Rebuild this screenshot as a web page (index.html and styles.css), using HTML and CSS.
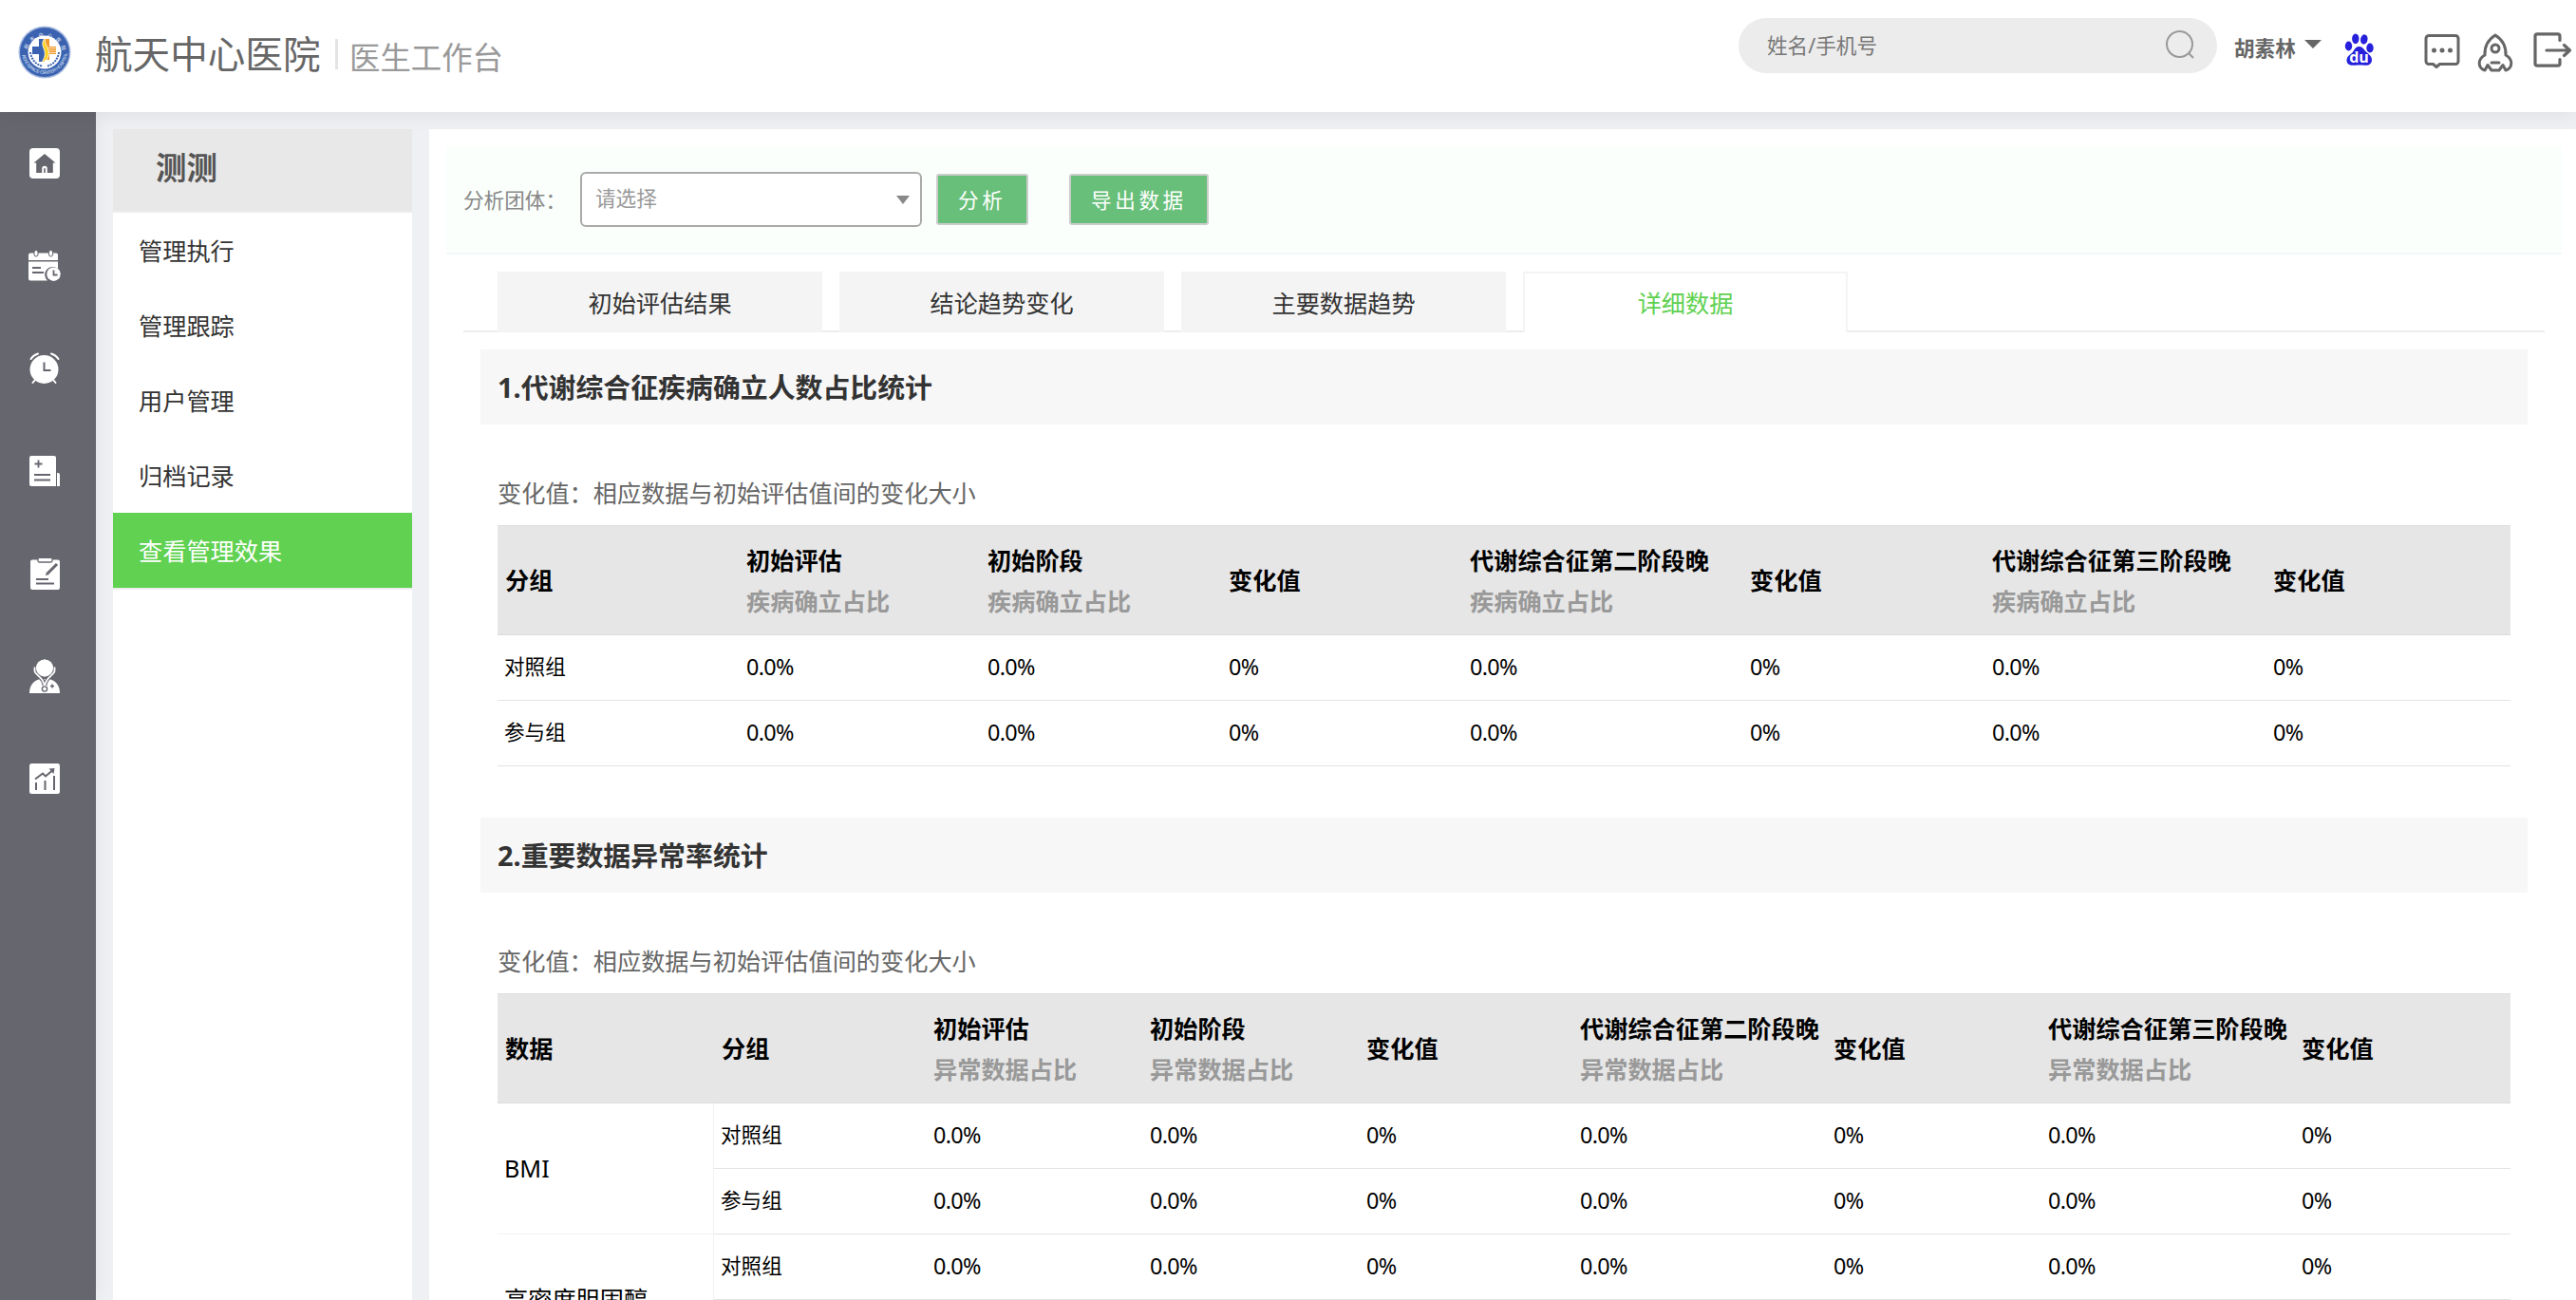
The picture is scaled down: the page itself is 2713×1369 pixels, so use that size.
FILE: index.html
```html
<!DOCTYPE html>
<html lang="zh-CN">
<head>
<meta charset="utf-8">
<title>航天中心医院 医生工作台</title>
<link rel="stylesheet" href="styles.css">
</head>
<body>
<header class="topbar">
  <svg class="logo" width="56" height="56" viewBox="0 0 56 56">
    <defs>
      <path id="arc-top" d="M8.5 31a19.5 19.5 0 1 1 39 0"/>
      <path id="arc-bottom" d="M4 27a24 24 0 0 0 48 0"/>
    </defs>
    <circle cx="28" cy="28" r="27.5" fill="#a9bbe0"/>
    <circle cx="28" cy="28" r="26" fill="#3a62b0"/>
    <circle cx="28" cy="28" r="17.5" fill="#fff"/>
    <text class="logo-text"><textPath href="#arc-top" startOffset="6">航天中心医院</textPath></text>
    <text class="logo-text-en"><textPath href="#arc-bottom" startOffset="4">AEROSPACE CENTER HOSPITAL</textPath></text>
    <path d="M22 14h6v24h-6v-8h-7v-8h7z" fill="#3a62b0"/>
    <path d="M28 14h5v8h7v8h-7v6h-5z" fill="#f29a2c"/>
    <path d="M30 23.5h10M30 26h10M30 28.500h10" stroke="#fff" stroke-width=".7"/>
    <path d="M29 12c-6 7-2 10-1 15s-1 8-3 12c7-3 8-8 7-13s-5-7-3-14z" fill="#ffd21f" stroke="#fff" stroke-width=".8"/>
    <path d="M13 28c1 8 6 13 13 15M43 28c-1 8-6 13-13 15" fill="none" stroke="#3a62b0" stroke-width="2" stroke-dasharray="2 1"/>
  </svg>
  <h1 class="brand">航天中心医院</h1>
  <span class="brand-sep"></span>
  <span class="brand-sub">医生工作台</span>
  <label class="search">
    <span>姓名/手机号</span>
    <svg width="32" height="32" viewBox="0 0 32 32" fill="none" stroke="#999" stroke-width="2"><circle cx="15.500" cy="15.500" r="13.500"/><path d="M25 25l5 5"/></svg>
  </label>
  <span class="user">胡素林</span>
  <span class="user-caret"></span>
  <svg class="baidu" width="32" height="35" viewBox="0 0 32 35" fill="#2620dd">
    <ellipse cx="11.800" cy="5.800" rx="3.700" ry="5.400"/><ellipse cx="20.800" cy="6.500" rx="3.700" ry="5.200" transform="rotate(10 20.800 6.500)"/>
    <ellipse cx="4.500" cy="13.500" rx="3.700" ry="5.100"/><ellipse cx="27" cy="15.500" rx="3.700" ry="5.100"/>
    <path d="M15.500 14c3 0 4.500 2 6 4 2 2.800 7.500 5 7.500 10 0 4-3 6-6.500 5.800-3-.2-4.500-.3-7-.3s-4 .3-6.500.3C5 33.800 2.500 32 2.500 28.500c0-5 5.500-6.500 7-9.500 1.500-2.500 3-5 6-5z"/>
    <text class="baidu-text" x="15.500" y="31" text-anchor="middle">du</text>
  </svg>
  <svg class="chat" width="38" height="38" viewBox="0 0 38 38" fill="none" stroke="#666" stroke-width="3" stroke-linejoin="round">
    <path d="M5 2.500h28a3 3 0 0 1 3 3v24a3 3 0 0 1-3 3H16.500L13 35.500l-3.500-3H5a3 3 0 0 1-3-3v-24a3 3 0 0 1 3-3z"/>
    <g fill="#666" stroke="none"><circle cx="10.500" cy="18" r="2.500"/><circle cx="19" cy="18" r="2.500"/><circle cx="27.500" cy="18" r="2.500"/></g>
  </svg>
  <svg class="rocket" width="38" height="41" viewBox="0 0 38 41" fill="none" stroke="#666" stroke-width="3" stroke-linejoin="round" stroke-linecap="round">
    <path d="M19 2C12 6.500 7.500 14 8 23c-3.500 2-6 5-5.800 9 .2 3.500 2.300 6 5.800 7l3-5.500 4 5.500h8l4-5.500 3 5.500c3.500-1 5.600-3.500 5.800-7 .2-4-2.300-7-5.800-9C30.500 14 26 6.500 19 2z"/>
    <circle cx="19" cy="16" r="4"/><path d="M15 31h8"/>
  </svg>
  <svg class="exit" width="41" height="38" viewBox="0 0 41 38" fill="none" stroke="#666" stroke-width="3.200" stroke-linecap="round" stroke-linejoin="round">
    <path d="M28 8.500V4q0-2.200-2.200-2.200H4.200Q2 1.800 2 4v29q0 2.200 2.200 2.200h21.600Q28 35.200 28 33v-4.500M14 19h24M32.500 13.500l6 5.500-6 5.500"/>
  </svg>
</header>

<div class="body">
  <nav class="rail">
    <a class="rail-item"><svg width="32" height="32" viewBox="0 0 32 32"><rect width="32" height="32" rx="4" fill="#fff"/><path d="M16 6L4.500 15.500h2.700V26h6v-4.500a2.800 2.800 0 0 1 5.600 0V26h6V15.500h2.700z" fill="#66666f"/><path d="M15.200 26v-4.300a.8.800 0 0 1 1.600 0V26z" fill="#66666f"/></svg></a>
    <a class="rail-item"><svg width="34" height="32" viewBox="0 0 34 32"><path d="M2 2.500h27a2 2 0 0 1 2 2V10H0V4.500a2 2 0 0 1 2-2zM0 11.500h31V19a8 8 0 0 0-11 12.500H2a2 2 0 0 1-2-2z" fill="#fff"/><g fill="#fff" stroke="#66666f"><rect x="6" y="-.5" width="4" height="6.500" rx="2"/><rect x="21.500" y="-.5" width="4" height="6.500" rx="2"/></g><path d="M4 18h9M4 23h12" stroke="#66666f" stroke-width="1.800"/><circle cx="26.500" cy="24.700" r="7.200" fill="#fff"/><path d="M26.500 20.500v5h4" fill="none" stroke="#66666f" stroke-width="1.800"/></svg></a>
    <a class="rail-item"><svg width="32" height="34" viewBox="0 0 32 34" fill="none" stroke="#fff" stroke-width="2" stroke-linecap="round"><circle cx="15.500" cy="18" r="15" fill="#fff" stroke="none"/><path d="M1.500 7Q4 3 9 1.500M30.500 7Q28 3 23 1.500M3.500 32l2-2.500M27.500 32l-2-2.500"/><path d="M15.500 10.500v8.500h7" stroke="#66666f" stroke-linecap="butt"/></svg></a>
    <a class="rail-item"><svg width="32" height="32" viewBox="0 0 32 32"><path d="M2 0h24a2 2 0 0 1 2 2v30H2a2 2 0 0 1-2-2V2a2 2 0 0 1 2-2zM29 18h1a2 2 0 0 1 2 2v12h-3z" fill="#fff"/><path d="M9.500 4.500v8M5.500 8.500h8M5 20h17M5 25.500h17" stroke="#66666f" stroke-width="1.800"/></svg></a>
    <a class="rail-item"><svg width="31" height="33" viewBox="0 0 31 33"><path d="M2 1.500h27a2 2 0 0 1 2 2V31a2 2 0 0 1-2 2H2a2 2 0 0 1-2-2V3.500a2 2 0 0 1 2-2z" fill="#fff"/><path d="M8 0v2.500a1.500 1.500 0 0 0 1.500 1.500h12a1.500 1.500 0 0 0 1.500-1.500V0" fill="#fff" stroke="#66666f" stroke-width="1.300"/><path d="M6 22h13M6 26.500h19" stroke="#66666f" stroke-width="1.800"/><path d="M18.500 15.500L28 6" stroke="#66666f" stroke-width="3"/><path d="M16 18l1-4 3 3z" fill="#66666f"/></svg></a>
    <a class="rail-item"><svg width="32" height="36" viewBox="0 0 32 36"><path d="M0 36c0-8 4-13 11-15h10c7 2 11 7 11 15z" fill="#fff"/><circle cx="16" cy="9.500" r="9" fill="#fff"/><path d="M5.500 8.500v4c0 4 10 7 10 15.500M26.500 8.500v4c0 4-10 7-10 15.500" fill="none" stroke="#66666f" stroke-width="4"/><path d="M5.500 8.500v4c0 4 10 7 10 15.500M26.500 8.500v4c0 4-10 7-10 15.500" fill="none" stroke="#fff" stroke-width="1.800"/><circle cx="16" cy="9.500" r="9" fill="#fff"/><circle cx="16" cy="31.500" r="2.600" fill="#fff" stroke="#66666f" stroke-width="1.400"/><path d="M24 26.500v4M22 28.500h4" stroke="#66666f" stroke-width="1.400"/></svg></a>
    <a class="rail-item"><svg width="32" height="32" viewBox="0 0 32 32"><rect width="32" height="32" rx="2.500" fill="#fff"/><g fill="none" stroke="#66666f" stroke-width="2"><path d="M7 20v8M16.500 18v10M26 13v15M6 16.500l8-6 3 3 7-6"/></g><path d="M20.500 5.500l6-.5-1 6z" fill="#66666f"/></svg></a>
  </nav>

  <aside class="side">
    <h2 class="side-title">测测</h2>
    <a class="side-item">管理执行</a>
    <a class="side-item">管理跟踪</a>
    <a class="side-item">用户管理</a>
    <a class="side-item">归档记录</a>
    <a class="side-item active">查看管理效果</a>
  </aside>

  <main class="main">
    <div class="filter">
      <span class="filter-label">分析团体：</span>
      <div class="select"><span>请选择</span><i class="select-caret"></i></div>
      <button class="btn">分析</button>
      <button class="btn export">导出数据</button>
    </div>

    <div class="tabs">
      <a class="tab">初始评估结果</a>
      <a class="tab">结论趋势变化</a>
      <a class="tab">主要数据趋势</a>
      <a class="tab current">详细数据</a>
    </div>

    <section class="section">
      <h3 class="section-title">1.代谢综合征疾病确立人数占比统计</h3>
      <p class="note">变化值：相应数据与初始评估值间的变化大小</p>
      <table class="table">
        <colgroup><col class="w254"><col class="w254"><col class="w254"><col class="w254"><col class="w295"><col class="w255"><col class="w296"><col></colgroup>
        <thead><tr>
          <th>分组</th>
          <th>初始评估<small>疾病确立占比</small></th>
          <th>初始阶段<small>疾病确立占比</small></th>
          <th>变化值</th>
          <th>代谢综合征第二阶段晚<small>疾病确立占比</small></th>
          <th>变化值</th>
          <th>代谢综合征第三阶段晚<small>疾病确立占比</small></th>
          <th>变化值</th>
        </tr></thead>
        <tbody>
          <tr><td class="group">对照组</td><td>0.0%</td><td>0.0%</td><td>0%</td><td>0.0%</td><td>0%</td><td>0.0%</td><td>0%</td></tr>
          <tr><td class="group">参与组</td><td>0.0%</td><td>0.0%</td><td>0%</td><td>0.0%</td><td>0%</td><td>0.0%</td><td>0%</td></tr>
        </tbody>
      </table>
    </section>

    <section class="section">
      <h3 class="section-title">2.重要数据异常率统计</h3>
      <p class="note">变化值：相应数据与初始评估值间的变化大小</p>
      <table class="table">
        <colgroup><col class="w228"><col class="w223"><col class="w228"><col class="w228"><col class="w225"><col class="w267"><col class="w226"><col class="w267"><col></colgroup>
        <thead><tr>
          <th>数据</th>
          <th>分组</th>
          <th>初始评估<small>异常数据占比</small></th>
          <th>初始阶段<small>异常数据占比</small></th>
          <th>变化值</th>
          <th>代谢综合征第二阶段晚<small>异常数据占比</small></th>
          <th>变化值</th>
          <th>代谢综合征第三阶段晚<small>异常数据占比</small></th>
          <th>变化值</th>
        </tr></thead>
        <tbody>
          <tr><td class="metric" rowspan="2">BMI</td><td class="group">对照组</td><td>0.0%</td><td>0.0%</td><td>0%</td><td>0.0%</td><td>0%</td><td>0.0%</td><td>0%</td></tr>
          <tr><td class="group">参与组</td><td>0.0%</td><td>0.0%</td><td>0%</td><td>0.0%</td><td>0%</td><td>0.0%</td><td>0%</td></tr>
          <tr><td class="metric" rowspan="2">高密度胆固醇</td><td class="group">对照组</td><td>0.0%</td><td>0.0%</td><td>0%</td><td>0.0%</td><td>0%</td><td>0.0%</td><td>0%</td></tr>
          <tr><td colspan="8"></td></tr>
        </tbody>
      </table>
    </section>
  </main>
</div>
</body>
</html>
```
FILE: styles.css
```css
* { box-sizing: border-box; }
html, body { height: 100%; }
body {
  margin: 0;
  overflow: hidden;
  display: flex;
  flex-direction: column;
  background: #eff0f4;
  color: #333;
  font-family: "Noto Sans", "Noto Sans CJK SC", sans-serif;
  font-size: 25.2px;
}
h1, h2, h3, p { margin: 0; }
svg { display: block; flex: none; overflow: visible; }

/* top bar */
.topbar {
  flex: none;
  position: relative;
  z-index: 2;
  height: 118px;
  display: flex;
  align-items: flex-start;
  background: #fff;
  box-shadow: 0 0 22px rgba(0, 0, 0, .09);
  white-space: nowrap;
}
.logo { margin: 27px 0 0 19px; }
.logo-text { font: 5px "Noto Sans CJK SC", sans-serif; fill: #fff; letter-spacing: 4px; }
.logo-text-en { font: 5px "Liberation Sans", sans-serif; fill: #dfe7f6; letter-spacing: -.4px; }
.brand { margin: 27px 0 0 25px; width: 253px; font-size: 39.6px; line-height: 60px; font-weight: 400; color: #666; }
.brand-sep { width: 3px; height: 32px; margin-top: 41px; background: #e4e4e4; }
.brand-sub { margin: 35px auto 0 12px; font-size: 32.4px; line-height: 50px; color: #999; }
.search {
  width: 504px;
  height: 58px;
  margin: 19px 18px 0 0;
  padding: 0 23px 0 30px;
  display: flex;
  align-items: center;
  justify-content: space-between;
  border-radius: 29px;
  background: #ececec;
  color: #777;
  font-size: 21.6px;
}
.search span { line-height: 32px; }
.search svg { margin-top: -2px; }
.user { width: 74px; margin-top: 35px; font-size: 21.6px; line-height: 32px; font-weight: 700; color: #666; }
.user-caret { margin-top: 42px; border: 9px solid transparent; border-top-color: #666; border-bottom: 0; }
.baidu { margin: 35px 52px 0 24px; }
.baidu-text { font: bold 16px "Open Sans", sans-serif; fill: #fff; }
.chat { margin-top: 35px; }
.rocket { margin: 35px 21px 0 18px; }
.exit { margin: 34px 4px 0 0; }

.body { flex: 1; min-height: 0; display: flex; }

/* icon rail */
.rail { flex: none; width: 101px; background: #66666f; box-shadow: 0 0 18px rgba(0, 0, 0, .06); }
.rail-item { height: 108px; padding-right: 7px; display: flex; align-items: center; justify-content: center; }

/* side menu */
.side { flex: none; width: 315px; margin: 18px 18px 0; background: #fff; }
.side-title {
  height: 88px;
  padding-left: 45px;
  border-bottom: 2px solid #ededed;
  background: #e8e8e8;
  color: #555;
  font-size: 32.4px;
  line-height: 81px;
}
.side-item { display: block; height: 79px; padding-left: 27px; line-height: 80px; }
.side-item.active { height: 81px; border-bottom: 2px solid #eee; background: #60d151; color: #fff; }

/* main panel */
.main { flex: 1; min-width: 0; margin-top: 18px; padding: 18px 15px 0 18px; background: #fff; overflow: hidden; }
.filter {
  height: 114px;
  padding-left: 18px;
  display: flex;
  align-items: center;
  border-bottom: 2px solid #f2f7f7;
  background: #fafffc;
  font-size: 21.6px;
}
.filter-label { width: 123px; padding-bottom: 2px; color: #888; white-space: nowrap; }
.select {
  width: 360px;
  height: 58px;
  padding: 0 11px 5px 14px;
  display: flex;
  align-items: center;
  justify-content: space-between;
  border: 2px solid #aaa;
  border-radius: 6px;
  background: #fff;
  color: #999;
}
.select-caret { border: 7px solid transparent; border-top: 9px solid #888; border-bottom: 0; margin-top: 6px; }
.btn {
  width: 97px;
  height: 54px;
  margin-left: 15px;
  padding: 0 0 2px 21px;
  border: 2px solid #ccc;
  border-radius: 3px;
  background: #67bf79;
  color: #fff;
  font: inherit;
  text-align: left;
  letter-spacing: 3.6px;
}
.export { width: 147px; margin-left: 43px; }

.tabs {
  height: 64px;
  margin: 18px 18px 18px;
  padding-left: 36px;
  display: flex;
  gap: 18px;
  background: linear-gradient(#ededed, #ededed) bottom / 100% 2px no-repeat;
}
.tab { width: 342px; text-align: center; line-height: 66px; background: #f4f4f4; }
.tab.current { border: 2px solid #f4f4f4; border-bottom: 0; background: #fff; color: #60d151; line-height: 62px; }

/* data sections */
.section { margin: 0 36px 54px; }
.section-title { height: 79px; padding-left: 18px; background: #f7f7f7; font-size: 28.9px; line-height: 80px; }
.note { margin: 52px 18px 14px; line-height: 40px; color: #666; }
.table { width: calc(100% - 36px); margin: 0 18px; border-collapse: separate; border-spacing: 0; table-layout: fixed; color: #000; }
.table th {
  height: 116px;
  padding: 1px 0 0 8px;
  border-top: 1px solid #ddd;
  border-bottom: 1px solid #ddd;
  background: #e6e6e6;
  text-align: left;
  line-height: 43px;
  white-space: nowrap;
}
.table small { display: block; font-size: inherit; color: #999; }
.table td {
  height: 69px;
  padding: 0 0 2px 8px;
  border-bottom: 1px solid #e4e4e4;
  font-size: 23.4px;
  line-height: 32px;
  letter-spacing: -.7px;
}
.table .group { padding-left: 7px; font-size: 21.6px; letter-spacing: 0; }
.table .metric { padding-left: 7px; border-right: 1px solid #f2f2f2; border-bottom-color: #f2f2f2; font-size: 25.2px; letter-spacing: 0; }
.w223 { width: 223px; }
.w225 { width: 225px; }
.w226 { width: 226px; }
.w228 { width: 228px; }
.w254 { width: 254px; }
.w255 { width: 255px; }
.w267 { width: 267px; }
.w295 { width: 295px; }
.w296 { width: 296px; }
```
